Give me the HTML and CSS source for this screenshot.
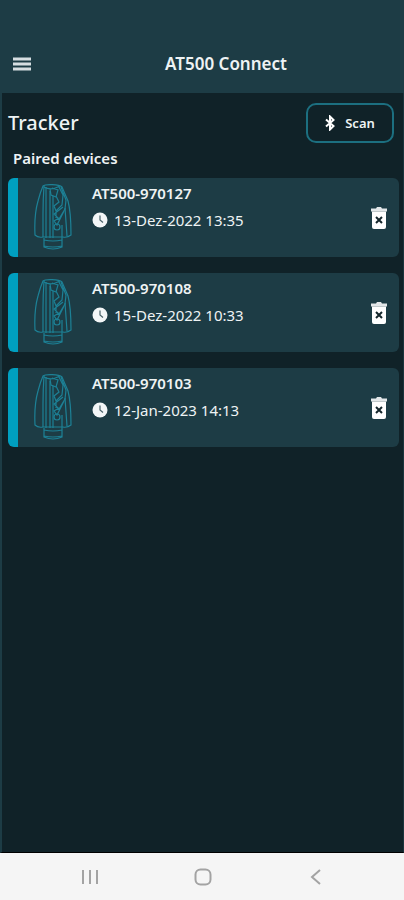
FILE: index.html
```html
<!DOCTYPE html>
<html lang="en">
<head>
    <meta charset="UTF-8">
    <meta name="viewport" content="width=device-width, initial-scale=1.0">
    <title>AT500 Connect</title>
    <link rel="stylesheet" href="styles.css">
</head>
<body>
    <!-- Shared icons -->
    <svg class="sprite" aria-hidden="true">
        <symbol id="icon-tracker" viewBox="0 0 38 66">
            <path d="M9 2 C11 0 25 0 28 3 L34 17 Q37 28 37 51 Q33 54 29 53 H9 Q4 54 1 51 Q0 31 4 17 Q6 9 9 2 Z"/>
            <path d="M10 2 Q9 15 9 30 V53 M12 3 Q12 15 12 30 V54 M16 7 V54 M19 12 V54 M28 41 V54 M31 24 L33 52"/>
            <path d="M10 3 Q17 7 26 2 M16 5 L17 11 L22 13 L24 6 L18 4 M25 3 L29 11 L28 21 L22 27 L20 22 L25 18 L22 12 M27 3 L32 16 L31 25 L25 35 L20 30 L29 23 M22 28 V34 M30 27 L23 41 L20 37 L25 34"/>
            <circle cx="23" cy="43" r="3"/>
            <path d="M10 54 V63 Q19 67 28 63 V54 M10 56 Q19 58 28 56 M10 62 Q19 64 28 62"/>
        </symbol>
        <symbol id="icon-clock" viewBox="0 0 16 16">
            <circle cx="8" cy="8" r="7.5" fill="#f3f6f7"/>
            <path d="M8 3.5 V8 L11 10.5" fill="none" stroke="#4a6269" stroke-width="1.2"/>
        </symbol>
        <symbol id="icon-trash" viewBox="0 0 18 22">
            <path d="M1 1.5 H6 L7 0 H11 L12 1.5 H17 V4.5 H1 Z" fill="#e3e7e9"/>
            <path d="M2 4.5 H16 V20 Q16 22 14 22 H4 Q2 22 2 20 Z" fill="#fff"/>
            <path d="M6 10 L12 16 M12 10 L6 16" stroke="#14262b" stroke-width="2"/>
        </symbol>
    </svg>

    <header class="app-bar">
        <button class="menu-button" type="button" aria-label="Menu">
            <svg class="menu-icon" viewBox="0 0 18 14">
                <path d="M0 2 H18 M0 7 H18 M0 12 H18"/>
            </svg>
        </button>
        <h1 class="app-title">AT500 Connect</h1>
    </header>

    <main class="content">
        <div class="toolbar">
            <h2 class="page-title">Tracker</h2>
            <button class="scan-button" type="button">
                <svg class="bluetooth-icon" viewBox="0 0 10 16">
                    <path d="M1 4.5 L8.5 11 L5 14.5 V1.5 L8.5 5 L1 11.5"/>
                </svg>
                Scan
            </button>
        </div>

        <h3 class="section-title">Paired devices</h3>
        <ul class="device-list">
            <li class="device">
                <svg class="tracker-icon"><use href="#icon-tracker"/></svg>
                <div class="device-info">
                    <h4 class="device-name">AT500-970127</h4>
                    <p class="device-date"><svg class="clock-icon"><use href="#icon-clock"/></svg>13-Dez-2022 13:35</p>
                </div>
                <button class="delete-button" type="button" aria-label="Delete AT500-970127">
                    <svg class="trash-icon"><use href="#icon-trash"/></svg>
                </button>
            </li>
            <li class="device">
                <svg class="tracker-icon"><use href="#icon-tracker"/></svg>
                <div class="device-info">
                    <h4 class="device-name">AT500-970108</h4>
                    <p class="device-date"><svg class="clock-icon"><use href="#icon-clock"/></svg>15-Dez-2022 10:33</p>
                </div>
                <button class="delete-button" type="button" aria-label="Delete AT500-970108">
                    <svg class="trash-icon"><use href="#icon-trash"/></svg>
                </button>
            </li>
            <li class="device">
                <svg class="tracker-icon"><use href="#icon-tracker"/></svg>
                <div class="device-info">
                    <h4 class="device-name">AT500-970103</h4>
                    <p class="device-date"><svg class="clock-icon"><use href="#icon-clock"/></svg>12-Jan-2023 14:13</p>
                </div>
                <button class="delete-button" type="button" aria-label="Delete AT500-970103">
                    <svg class="trash-icon"><use href="#icon-trash"/></svg>
                </button>
            </li>
        </ul>
    </main>

    <nav class="system-nav">
        <button class="nav-button" type="button" aria-label="Recent apps">
            <svg class="nav-icon" viewBox="0 0 18 18"><path d="M2 2 V16 M9 2 V16 M16 2 V16"/></svg>
        </button>
        <button class="nav-button" type="button" aria-label="Home">
            <svg class="nav-icon" viewBox="0 0 18 18"><rect x="1.5" y="1.5" width="15" height="15" rx="5"/></svg>
        </button>
        <button class="nav-button" type="button" aria-label="Back">
            <svg class="nav-icon" viewBox="0 0 18 18"><path d="M13 2 L5 9 L13 16"/></svg>
        </button>
    </nav>
</body>
</html>
```
FILE: styles.css
```css
* {
    box-sizing: border-box;
}
body {
    display: flex;
    flex-direction: column;
    min-height: 100vh;
    margin: 0;
    font-family: "Noto Sans", sans-serif;
    color: #eef3f4;
    background-color: #102228;
}
h1, h2, h3, h4, p, ul {
    margin: 0;
    padding: 0;
}
button {
    padding: 0;
    border: none;
    background: none;
    color: inherit;
    font-family: inherit;
    cursor: pointer;
}
svg {
    display: block;
    flex: none;
}
.sprite {
    position: absolute;
    width: 0;
    height: 0;
}

/* Top bar */
.app-bar {
    display: grid;
    grid-template-columns: 44px 1fr;
    align-items: center;
    padding: 49px 0 14px;
    background-color: #1d3c45;
}
.menu-button {
    display: flex;
    justify-content: center;
    align-items: center;
    height: 30px;
}
.menu-icon {
    width: 18px;
    height: 14px;
    stroke: #d6dee1;
    stroke-width: 3;
}
.app-title {
    padding-left: 4px;
    font-size: 17px;
    line-height: 24px;
    font-weight: 600;
    text-align: center;
}

/* Tracker page */
.content {
    flex: 1;
    padding: 10px 4px 0 6px;
    border-left: 2px solid #1d3c45;
    border-right: 1px solid #19343c;
    border-bottom: 1px solid #000;
}
.toolbar {
    display: flex;
    justify-content: space-between;
    align-items: center;
    padding-right: 5px;
}
.page-title {
    font-size: 20px;
    line-height: 24px;
    font-weight: 500;
}
.scan-button {
    display: flex;
    justify-content: center;
    align-items: center;
    gap: 10px;
    width: 88px;
    height: 40px;
    border: 2px solid #1c6f80;
    border-radius: 10px;
    font-size: 13px;
    font-weight: 600;
}
.bluetooth-icon {
    width: 10px;
    height: 16px;
    fill: none;
    stroke: #fff;
    stroke-width: 2;
}
.section-title {
    padding: 3px 5px 8px;
    font-size: 15px;
    line-height: 24px;
    font-weight: 600;
}
.device-list {
    display: grid;
    gap: 16px;
    list-style: none;
}
.device {
    display: flex;
    height: 79px;
    padding-right: 11px;
    border-left: 10px solid #009fc0;
    border-radius: 6px;
    background-color: #1d3c45;
}
.tracker-icon {
    width: 38px;
    height: 66px;
    margin: 6px 20px 0 16px;
    fill: none;
    stroke: #1d8196;
    stroke-width: 1.2;
}
.device-info {
    flex: 1;
    padding-top: 3px;
}
.device-name {
    font-size: 15px;
    line-height: 24px;
    font-weight: 600;
}
.device-date {
    display: flex;
    align-items: center;
    gap: 6px;
    padding-top: 3px;
    font-size: 15px;
    line-height: 24px;
}
.clock-icon {
    width: 16px;
    height: 16px;
}
.delete-button {
    align-self: center;
}
.trash-icon {
    width: 18px;
    height: 22px;
}

/* Android navigation bar */
.system-nav {
    display: flex;
    justify-content: center;
    padding: 0 32px 0 34px;
    background-color: #f5f5f5;
}
.nav-button {
    display: flex;
    flex: 1;
    justify-content: center;
    align-items: center;
    height: 47px;
}
.nav-icon {
    width: 18px;
    height: 18px;
    fill: none;
    stroke: #a3a3a3;
    stroke-width: 2;
}
```
